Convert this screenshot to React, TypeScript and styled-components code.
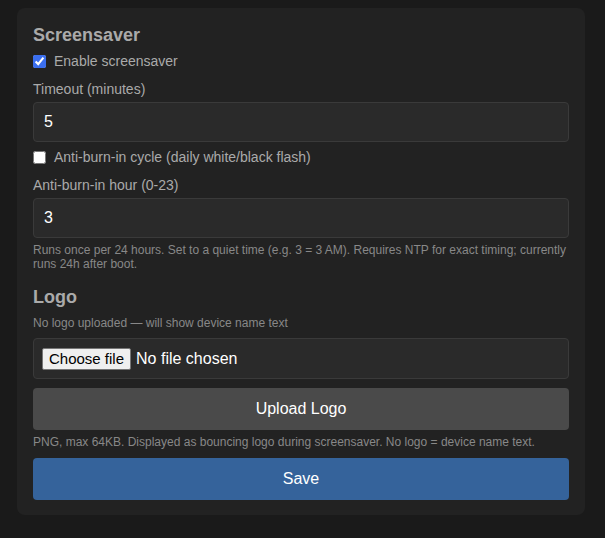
import React from 'react';
import { createGlobalStyle, styled } from 'styled-components';

const Global = createGlobalStyle`
  body {
    margin: 0;
    background: #1a1a1a;
    font-family: "Liberation Sans", Arial, sans-serif;
  }
`;

const Page = styled.div`
  padding: 8px 20px 12px 17px;
`;

const Card = styled.section`
  background: #222222;
  border-radius: 8px;
  padding: 16px 16px 15px;
  display: flex;
  flex-direction: column;
`;

const Heading = styled.h2<{ $top?: number }>`
  margin: ${(p) => p.$top ?? 0}px 0 0;
  font-size: 18px;
  line-height: 22px;
  font-weight: bold;
  color: #aaaaaa;
`;

const CheckRow = styled.label<{ $top: number }>`
  display: flex;
  align-items: center;
  gap: 8px;
  margin-top: ${(p) => p.$top}px;
  font-size: 14px;
  line-height: 18px;
  color: #aaaaaa;

  input {
    margin: 0;
    width: 13px;
    height: 13px;
    accent-color: #3b6ff0;
  }
`;

const Label = styled.div`
  margin-top: 10px;
  font-size: 14px;
  line-height: 18px;
  color: #aaaaaa;
`;

const Field = styled.div`
  margin-top: 4px;
  height: 40px;
  box-sizing: border-box;
  border: 1px solid #3a3a3a;
  border-radius: 4px;
  background: #2a2a2a;
  display: flex;
  align-items: center;
  padding: 0 10px;
  color: #ffffff;
  font-size: 16px;
`;

const Help = styled.p<{ $top: number }>`
  margin: ${(p) => p.$top}px 0 0;
  font-size: 12px;
  line-height: 14px;
  color: #888888;
`;

const FileButton = styled.span`
  background: #efefef;
  color: #000;
  border: 1px solid #767676;
  border-radius: 2px;
  padding: 1px 6px;
  font-size: 15px;
  line-height: 18px;
  margin-right: 5px;
`;

const Button = styled.button<{ $primary?: boolean; $top: number }>`
  margin-top: ${(p) => p.$top}px;
  height: 42px;
  border: none;
  border-radius: 4px;
  background: ${(p) => (p.$primary ? '#35639b' : '#4a4a4a')};
  color: #ffffff;
  font-family: inherit;
  font-size: 16px;
`;

export default function App(): JSX.Element {
  return (
    <>
      <Global />
      <Page>
        <Card>
          <Heading>Screensaver</Heading>
          <CheckRow $top={6}>
            <input type="checkbox" defaultChecked />
            Enable screensaver
          </CheckRow>
          <Label>Timeout (minutes)</Label>
          <Field>5</Field>
          <CheckRow $top={6}>
            <input type="checkbox" />
            Anti-burn-in cycle (daily white/black flash)
          </CheckRow>
          <Label>Anti-burn-in hour (0-23)</Label>
          <Field>3</Field>
          <Help $top={5}>
            Runs once per 24 hours. Set to a quiet time (e.g. 3 = 3 AM). Requires NTP for exact
            timing; currently runs 24h after boot.
          </Help>
          <Heading $top={15}>Logo</Heading>
          <Help $top={8}>No logo uploaded — will show device name text</Help>
          <Field style={{ marginTop: 8, height: 41, padding: '0 8px' }}>
            <FileButton>Choose file</FileButton>
            No file chosen
          </Field>
          <Button $top={9}>Upload Logo</Button>
          <Help $top={5}>
            PNG, max 64KB. Displayed as bouncing logo during screensaver. No logo = device name
            text.
          </Help>
          <Button $primary $top={9}>Save</Button>
        </Card>
      </Page>
    </>
  );
}
